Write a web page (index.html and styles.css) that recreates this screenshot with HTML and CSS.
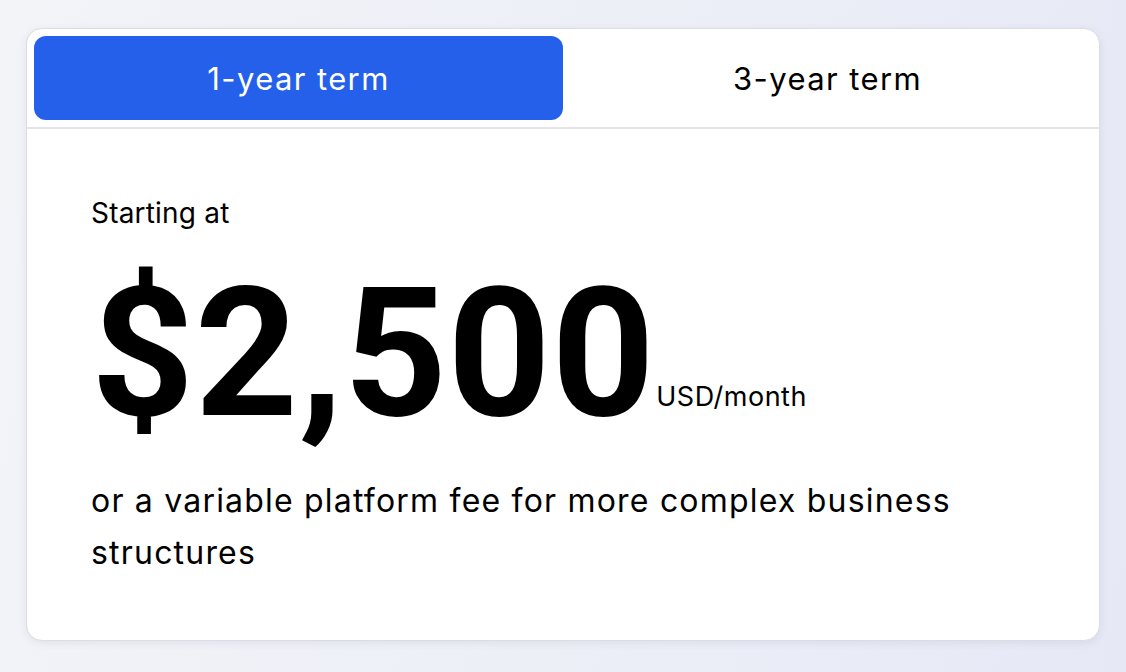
FILE: index.html
```html
<!DOCTYPE html>
<html lang="en">
<head>
    <meta charset="UTF-8">
    <meta name="viewport" content="width=device-width, initial-scale=1.0">
    <title>Pricing</title>
    <link rel="stylesheet" href="styles.css">
</head>
<body>
    <div class="card">
        <!-- Term switcher -->
        <div class="tabs">
            <button class="tab active">1-year term</button>
            <button class="tab">3-year term</button>
        </div>

        <div class="price-body">
            <p class="lead">Starting at</p>
            <div class="price">
                <span class="amount">$2,500</span>
                <span class="unit">USD/month</span>
            </div>
            <p class="note">or a variable platform fee for more complex business structures</p>
        </div>
    </div>
</body>
</html>
```

FILE: styles.css
```css
body {
    font-family: 'Inter', 'Liberation Sans', sans-serif;
    margin: 0;
    padding: 28px 26px 31px;
    height: 672px;
    box-sizing: border-box;
    background: linear-gradient(100deg, #f3f4f8 0%, #eceef7 60%, #e6e8f6 100%);
    color: #000;
}

.card {
    background: #ffffff;
    border-radius: 16px;
    border: 1px solid #dcdde3;
    box-shadow: 0 2px 8px rgba(30, 35, 70, 0.08);
    height: 100%;
    box-sizing: border-box;
    overflow: hidden;
}

.tabs {
    display: flex;
    padding: 7px;
    border-bottom: 2px solid #e4e4ea;
}

.tab {
    flex: 1;
    height: 84px;
    border: none;
    border-radius: 12px;
    background: transparent;
    font-family: inherit;
    font-size: 31px;
    letter-spacing: 1.4px;
    color: #000;
    cursor: pointer;
}

.tab.active {
    background: #2560eb;
    color: #ffffff;
}

.price-body {
    padding: 67px 64px 0;
}

.lead {
    font-size: 28px;
    letter-spacing: 0.2px;
    margin: 0;
    line-height: 34px;
}

.price {
    display: flex;
    align-items: flex-end;
    gap: 1px;
    margin-top: 34px;
}

/* big number uses a narrower face so it fits like the original */
.amount {
    font-family: 'Roboto', 'Inter', sans-serif;
    font-size: 180px;
    font-weight: 700;
    line-height: 180px;
    letter-spacing: 0.6px;
}

.unit {
    font-size: 27px;
    letter-spacing: 0.5px;
    line-height: 34px;
    margin-bottom: 30px;
}

.note {
    font-size: 32px;
    letter-spacing: 1.2px;
    line-height: 52px;
    margin: 31px 0 0;
}
```
